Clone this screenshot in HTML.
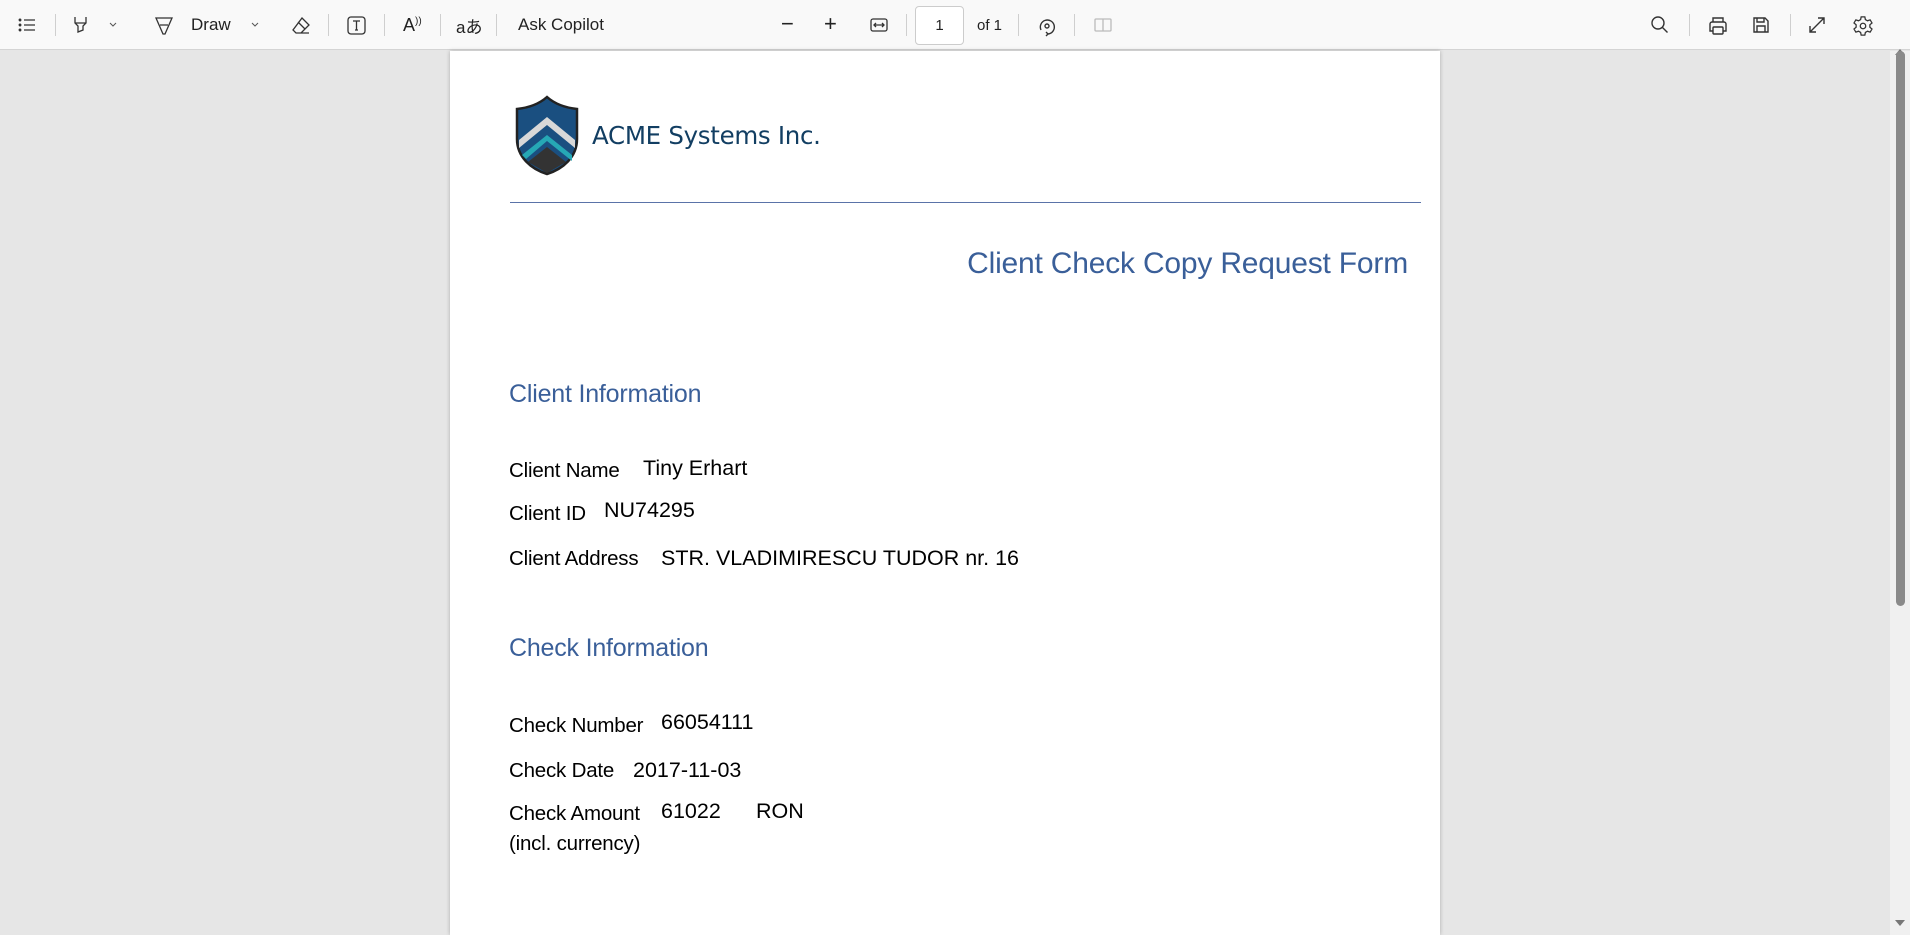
<!DOCTYPE html>
<html><head><meta charset="utf-8"><style>
*{margin:0;padding:0;box-sizing:border-box}
body{width:1910px;height:935px;overflow:hidden;background:#e6e6e6;font-family:"Liberation Sans",sans-serif;position:relative}
#tb{position:absolute;left:0;top:0;width:1910px;height:50px;background:#f9f9f9;border-bottom:1px solid #d4d4d4}
.i{position:absolute;top:15px}
.sep{position:absolute;top:14px;width:1px;height:22px;background:#cfcfcf}
.t{position:absolute;top:15px;font-size:17px;color:#222}
#page{position:absolute;left:450px;top:51px;width:990px;height:884px;background:#fff;box-shadow:0 0 4px rgba(0,0,0,.25)}
.a{position:absolute;white-space:nowrap}
.lab{font-family:"Liberation Sans",sans-serif;font-size:20.5px;color:#000;letter-spacing:-0.2px}
.val{font-family:"Liberation Sans",sans-serif;font-size:21.5px;color:#000}
.h{color:#3a5f99;font-size:25px;letter-spacing:-0.2px}
#sb{position:absolute;left:1890px;top:51px;width:20px;height:884px;background:#f0f0f0}
</style></head><body>
<div id="tb">
<svg class="i" style="left:17px" width="20" height="20" viewBox="0 0 20 20" fill="none" stroke="#333" stroke-width="1.3"><path d="M7 5h11M7 10h11M7 15h11"/><circle cx="3" cy="5" r=".8" fill="#333"/><circle cx="3" cy="10" r=".8" fill="#333"/><circle cx="3" cy="15" r=".8" fill="#333"/></svg>
<div class="sep" style="left:55px"></div>
<svg class="i" style="left:72px" width="20" height="22" viewBox="0 0 20 22" fill="none" stroke="#333" stroke-width="1.3"><path d="M3 2v6l3 3v6l5-2v-4l3-3V2M3 8h11"/></svg>
<svg class="i" style="left:108px;top:20px" width="10" height="10" viewBox="0 0 10 10" fill="none" stroke="#555"><path d="M2 3l3 3 3-3"/></svg>
<svg class="i" style="left:154px" width="20" height="22" viewBox="0 0 20 22" fill="none" stroke="#333" stroke-width="1.3"><path d="M2 3h16L11 19H9ZM6 10h8"/></svg>
<div class="t" style="left:191px">Draw</div>
<svg class="i" style="left:250px;top:20px" width="10" height="10" viewBox="0 0 10 10" fill="none" stroke="#555"><path d="M2 3l3 3 3-3"/></svg>
<svg class="i" style="left:290px" width="22" height="22" viewBox="0 0 22 22" fill="none" stroke="#333" stroke-width="1.3"><path d="M12 3l7 7-8 8H6l-3-3zM8 7l7 7M6 18h13"/></svg>
<div class="sep" style="left:328px"></div>
<svg class="i" style="left:346px" width="21" height="21" viewBox="0 0 21 21" fill="none" stroke="#333" stroke-width="1.3"><rect x="2" y="2" width="17" height="17" rx="3"/><path d="M7 6h7M10.5 6v9M9 15h3"/></svg>
<div class="sep" style="left:384px"></div>
<div class="t" style="left:403px;font-size:18px">A<sup style="font-size:10px">))</sup></div>
<div class="sep" style="left:440px"></div>
<div class="t" style="left:456px;font-family:'Liberation Sans','Noto Sans CJK JP',sans-serif;top:13px">aあ</div>
<div class="sep" style="left:496px"></div>
<div class="t" style="left:518px">Ask Copilot</div>
<div class="t" style="left:781px;font-size:22px;top:11px">−</div>
<div class="t" style="left:824px;font-size:22px;top:11px">+</div>
<svg class="i" style="left:869px" width="20" height="20" viewBox="0 0 20 20" fill="none" stroke="#333" stroke-width="1.3"><rect x="2" y="4" width="16" height="12" rx="2"/><path d="M5 10h10M7 8l-2 2 2 2M13 8l2 2-2 2"/></svg>
<div class="sep" style="left:906px"></div>
<div style="position:absolute;left:915px;top:6px;width:49px;height:39px;background:#fff;border:1px solid #ccc;border-radius:4px;font-size:15px;text-align:center;line-height:37px;color:#222">1</div>
<div class="t" style="left:977px;font-size:15px;top:17px">of 1</div>
<div class="sep" style="left:1018px"></div>
<svg class="i" style="left:1036px" width="22" height="22" viewBox="0 0 22 22" fill="none" stroke="#333" stroke-width="1.4"><path d="M5 15a7 7 0 1 1 7 4"/><circle cx="11" cy="11" r="2"/><path d="M12 19l-2 2M12 19l-2-2"/></svg>
<div class="sep" style="left:1074px"></div>
<svg class="i" style="left:1093px" width="20" height="20" viewBox="0 0 20 20" fill="none" stroke="#bbb" stroke-width="1.3"><rect x="2" y="4" width="16" height="12" rx="1"/><path d="M10 4v12"/></svg>
<svg class="i" style="left:1650px" width="20" height="20" viewBox="0 0 20 20" fill="none" stroke="#333" stroke-width="1.4"><circle cx="8" cy="8" r="6"/><path d="M12.5 12.5l5 5"/></svg>
<div class="sep" style="left:1689px"></div>
<svg class="i" style="left:1707px" width="22" height="22" viewBox="0 0 22 22" fill="none" stroke="#333" stroke-width="1.4"><path d="M6 7V3h10v4M6 16H3V9a2 2 0 0 1 2-2h12a2 2 0 0 1 2 2v7h-3"/><rect x="6" y="12" width="10" height="7" rx="1"/></svg>
<svg class="i" style="left:1751px" width="20" height="20" viewBox="0 0 20 20" fill="none" stroke="#333" stroke-width="1.4"><path d="M3 3h11l3 3v11H3z"/><path d="M6 3v4h7V3M6 17v-6h8v6"/></svg>
<div class="sep" style="left:1790px"></div>
<svg class="i" style="left:1807px" width="20" height="20" viewBox="0 0 20 20" fill="none" stroke="#333" stroke-width="1.4"><path d="M3 17L17 3M11 3h6v6M3 11v6h6"/></svg>
<svg class="i" style="left:1852px" width="22" height="22" viewBox="0 0 24 24" fill="none" stroke="#333" stroke-width="1.4"><circle cx="12" cy="12" r="3"/><path d="M10 2h4l.6 3 2.3 1.3 2.9-1 2 3.4-2.3 2v2.6l2.3 2-2 3.4-2.9-1-2.3 1.3-.6 3h-4l-.6-3-2.3-1.3-2.9 1-2-3.4 2.3-2v-2.6L2.2 8.7l2-3.4 2.9 1L9.4 5z"/></svg>
</div>
<div id="page">
<svg class="a" style="left:64px;top:44px" width="66" height="81" viewBox="0 0 66 81"><path d="M33 2C24 10 12 13 3 14V44c0 18 14 30 30 35 16-5 30-17 30-35V14C54 13 42 10 33 2z" fill="#1a4f80" stroke="#222" stroke-width="2.5"/><path d="M5 45L33 22 61 45v8L33 30 5 53z" fill="#d8d8d8"/><path d="M8 60L33 40 58 60v6L33 46 12 64z" fill="#26a8b5"/><path d="M14 67L33 52 52 67 33 78z" fill="#333"/></svg>
<div class="a" style="left:142px;top:70px;font-size:24.5px;color:#123e62;font-family:'DejaVu Sans',sans-serif;letter-spacing:-0.3px">ACME Systems Inc.</div>
<div class="a" style="left:60px;top:151px;width:911px;height:1px;background:#5a73a8"></div>
<div class="a h" style="right:32px;top:196px;font-size:30px">Client Check Copy Request Form</div>
<div class="a h" style="left:59px;top:329px">Client Information</div>
<div class="a lab" style="left:59px;top:408px">Client Name</div><div class="a val" style="left:193px;top:405px">Tiny Erhart</div>
<div class="a lab" style="left:59px;top:451px">Client ID</div><div class="a val" style="left:154px;top:447px">NU74295</div>
<div class="a lab" style="left:59px;top:496px">Client Address</div><div class="a val" style="left:211px;top:495px">STR. VLADIMIRESCU TUDOR nr. 16</div>
<div class="a h" style="left:59px;top:583px">Check Information</div>
<div class="a lab" style="left:59px;top:663px">Check Number</div><div class="a val" style="left:211px;top:659px">66054111</div>
<div class="a lab" style="left:59px;top:708px">Check Date</div><div class="a val" style="left:183px;top:707px">2017-11-03</div>
<div class="a lab" style="left:59px;top:751px">Check Amount</div><div class="a val" style="left:211px;top:748px">61022</div><div class="a val" style="left:306px;top:748px">RON</div>
<div class="a lab" style="left:59px;top:781px">(incl. currency)</div>
</div>
<div id="sb"><div style="position:absolute;left:5px;top:-7px;width:0;height:0;border:5px solid transparent;border-bottom:6px solid #777"></div><div style="position:absolute;left:6px;top:0;width:9px;height:555px;background:#8a8a8a;border-radius:5px"></div><div style="position:absolute;left:5px;bottom:4px;width:0;height:0;border:5px solid transparent;border-top:6px solid #777"></div></div>
</body></html>
